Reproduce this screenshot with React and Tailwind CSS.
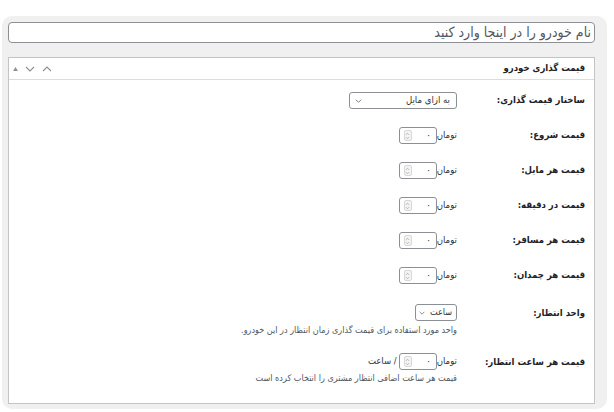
const font = { fontFamily: '"DejaVu Sans Condensed", "DejaVu Sans", Tahoma, sans-serif' };

const ChevronDown = ({ className }) => (
  <svg viewBox="0 0 10 6" className={className} fill="none" stroke="currentColor" strokeWidth="1.1">
    <path d="M1 1 L5 5 L9 1" />
  </svg>
);

const ChevronUp = ({ className }) => (
  <svg viewBox="0 0 10 6" className={className} fill="none" stroke="currentColor" strokeWidth="1.1">
    <path d="M1 5 L5 1 L9 5" />
  </svg>
);

const Spinner = () => (
  <div className="flex h-[11px] w-[8px] flex-col items-center justify-center rounded-[2px] border border-[#d8d8d8] bg-[#f4f4f4]">
    <svg viewBox="0 0 6 9" className="h-[8px] w-[5px]" fill="none" stroke="#9a9a9a" strokeWidth="0.8">
      <path d="M1 3.2 L3 1.2 L5 3.2" />
      <path d="M1 5.8 L3 7.8 L5 5.8" />
    </svg>
  </div>
);

const PriceField = () => (
  <div className="flex items-center">
    <span className="text-[9.5px] text-[#2c3338]">تومان</span>
    <div className="flex h-[17px] w-[38px] items-center justify-between rounded-[3px] border border-[#8c8f94] bg-white pl-[4px] pr-[5px]">
      <span className="text-[9.5px] text-[#2c3338]">۰</span>
      <Spinner />
    </div>
  </div>
);

const Row = ({ label, children }) => (
  <div className="flex h-[35px] items-center">
    <div className="w-[128px] shrink-0 text-[9.5px] font-bold text-[#1d2327]">{label}</div>
    <div>{children}</div>
  </div>
);

const App = () => {
  const priceRows = [
    "قیمت شروع:",
    "قیمت هر مایل:",
    "قیمت در دقیقه:",
    "قیمت هر مسافر:",
    "قیمت هر چمدان:",
  ];

  return (
    <div dir="rtl" style={font} className="h-[412px] w-[614px] overflow-hidden bg-white pt-4">
      <div className="mr-[7px] w-[605px] rounded-[10px] bg-[#f0f0f1] pb-[5px] pl-[6px] pr-[12px] pt-[6px]">
        <div className="flex h-[21px] items-center rounded-[4px] border border-[#8c8f94] bg-white px-[3px] text-[14px] text-[#50575e]">
          نام خودرو را در اینجا وارد کنید
        </div>

        <div className="mt-[14px] border border-[#c3c4c7] bg-white">
          <div className="flex h-[22px] items-center justify-between border-b border-[#dcdcde] pl-[4px] pr-[9px]">
            <span className="text-[9.5px] font-bold text-[#1d2327]">قیمت گذاری خودرو</span>
            <div dir="ltr" className="flex items-center gap-[7px] text-[#8c8f94]">
              <svg viewBox="0 0 6 5" className="h-[4px] w-[5px]" fill="currentColor">
                <path d="M0 5 L3 0 L6 5 Z" />
              </svg>
              <ChevronDown className="h-[6px] w-[10px]" />
              <ChevronUp className="h-[6px] w-[10px]" />
            </div>
          </div>

          <div className="pb-[18px] pr-[9px] pt-[3px]">
            <Row label="ساختار قیمت گذاری:">
              <div className="flex h-[17px] w-[108px] items-center justify-between rounded-[3px] border border-[#8c8f94] bg-white pl-[5px] pr-[6px]">
                <span className="text-[9.5px] text-[#2c3338]">به ازای مایل</span>
                <ChevronDown className="h-[4px] w-[7px] text-[#50575e]" />
              </div>
            </Row>

            {priceRows.map((label) => (
              <Row key={label} label={label}>
                <PriceField />
              </Row>
            ))}

            <div className="flex items-start pt-[11px]">
              <div className="w-[128px] shrink-0 text-[9.5px] font-bold leading-[17px] text-[#1d2327]">
                واحد انتظار:
              </div>
              <div>
                <div className="flex h-[17px] w-[42px] items-center justify-between rounded-[3px] border border-[#8c8f94] bg-white pl-[3px] pr-[4px]">
                  <span className="text-[9px] text-[#2c3338]">ساعت</span>
                  <ChevronDown className="h-[4px] w-[6px] text-[#50575e]" />
                </div>
                <p className="mt-[2px] text-[9px] leading-[14px] text-[#50575e]">
                  واحد مورد استفاده برای قیمت گذاری زمان انتظار در این خودرو.
                </p>
              </div>
            </div>

            <div className="flex items-start pt-[16px]">
              <div className="w-[128px] shrink-0 text-[9.5px] font-bold leading-[17px] text-[#1d2327]">
                قیمت هر ساعت انتظار:
              </div>
              <div>
                <div className="flex items-center gap-[2px]">
                  <PriceField />
                  <span className="text-[9.5px] text-[#2c3338]">/ ساعت</span>
                </div>
                <p className="mt-[1px] text-[9px] leading-[14px] text-[#50575e]">
                  قیمت هر ساعت اضافی انتظار مشتری را انتخاب کرده است
                </p>
              </div>
            </div>
          </div>
        </div>
      </div>
    </div>
  );
};

export default App;
